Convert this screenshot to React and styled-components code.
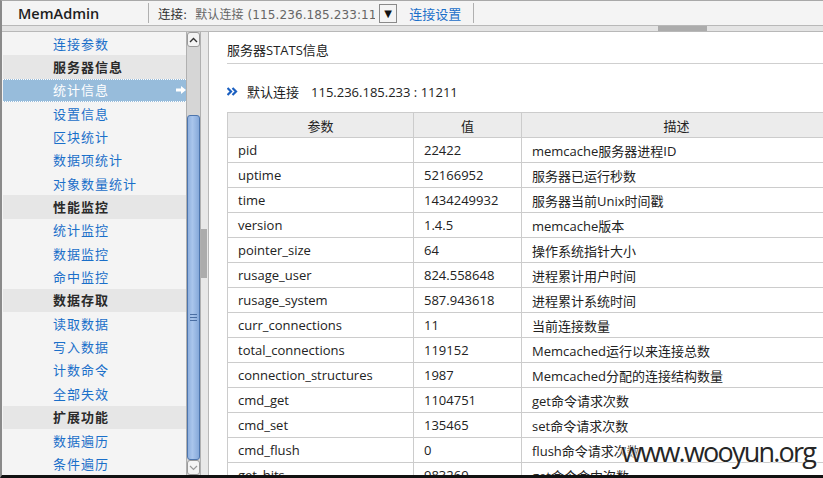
import React from "react";
import styled, { createGlobalStyle } from "styled-components";

const Global = createGlobalStyle`
  html, body { margin: 0; padding: 0; background: #fff; overflow: hidden; }
  * { box-sizing: border-box; }
`;

const CJK = `"Open Sans", "Noto Sans CJK SC", sans-serif`;
const UI = `"DejaVu Sans", "Noto Sans CJK SC", sans-serif`;

const Frame = styled.div`
  position: relative;
  width: 823px;
  height: 478px;
  border-top: 1px solid #a8a8a8;
  border-left: 2px solid #8a8a8a;
  border-bottom: 3px solid #111;
  display: flex;
  flex-direction: column;
  overflow: hidden;
  font-family: ${CJK};
`;

const TopBar = styled.div`
  height: 25px;
  flex: none;
  background: #f4f4f4;
  border-bottom: 1px solid #b8b8b8;
  display: flex;
  align-items: center;
  font-family: ${UI};
  font-size: 12.5px;
  color: #333;
`;

const Brand = styled.div`
  width: 146px;
  padding-left: 16px;
  font-family: "Open Sans", sans-serif;
  font-size: 14.5px;
  font-weight: 600;
  color: #1e1e1e;
`;

const Sep = styled.div`
  width: 1px;
  height: 20px;
  background: #b0b0b0;
`;

const ConnLabel = styled.span`
  margin-left: 9px;
  color: #333;
  white-space: nowrap;
`;

const SelectBox = styled.div`
  display: flex;
  align-items: center;
  margin-left: 8px;
  gap: 4px;
`;

const SelectText = styled.span`
  width: 180px;
  overflow: hidden;
  white-space: nowrap;
  color: #666;
  font-size: 12px;
  letter-spacing: 0.1px;
`;

const SelectBtn = styled.span`
  width: 18px;
  height: 19px;
  border: 1px solid #8a8a8a;
  background: #f4f4f4;
  display: flex;
  align-items: center;
  justify-content: center;
  font-size: 10px;
  color: #111;
`;

const TopLink = styled.a`
  margin: 0 12px 0 12px;
  color: #1a6fc9;
  text-decoration: none;
  font-family: ${CJK};
  font-size: 13px;
  white-space: nowrap;
`;

const HScroll = styled.div`
  height: 6px;
  flex: none;
  background: #e4e4e4;
  border-bottom: 1px solid #b8b8b8;
  padding-left: 656px;
`;

const HThumb = styled.div`
  width: 49px;
  height: 5px;
  background: #acacac;
`;

const Main = styled.div`
  flex: 1;
  display: flex;
  min-height: 0;
`;

const Menu = styled.div`
  width: 184px;
  flex: none;
  background: #f4f4f4;
  overflow: hidden;
  padding-left: 1px;
`;

const Item = styled.div`
  position: relative;
  height: 23.35px;
  display: flex;
  align-items: center;
  padding: 0 0 1px 50px;
  font-size: 13px;
  letter-spacing: 1px;
  white-space: nowrap;
  color: ${(p) => (p.$head ? "#2a2a2a" : p.$active ? "#fff" : "#1a6fc9")};
  font-weight: ${(p) => (p.$head ? 700 : 400)};
  background: ${(p) => (p.$head ? "#e6e6e6" : p.$active ? "#97bcdb" : "transparent")};
  border-top: ${(p) => (p.$active ? "1px dotted #fff" : "none")};
  border-bottom: ${(p) => (p.$active ? "1px dotted #fff" : "none")};
`;

const Arrow = styled.svg`
  position: absolute;
  right: 0;
  top: 50%;
  margin-top: -4px;
`;

const VScroll = styled.div`
  width: 15px;
  flex: none;
  display: flex;
  flex-direction: column;
  background: #d6d6d6;
  border-left: 1px solid #b0b0b0;
  border-right: 1px solid #b0b0b0;
`;

const ScrollBtn = styled.div`
  height: 15px;
  flex: none;
  background: #f4f4f4;
  border: 1px solid #9a9a9a;
  border-radius: 3px;
  display: flex;
  align-items: center;
  justify-content: center;
`;

const TrackGap = styled.div`
  height: 68px;
  flex: none;
`;

const Thumb = styled.div`
  flex: 1;
  border: 1px solid #4d75ad;
  border-radius: 3px;
  background: linear-gradient(to right, #8fb0de, #a9c5ec 40%, #86a9da);
  display: flex;
  align-items: center;
  justify-content: center;
  padding-top: 60px;
`;

const Grip = styled.div`
  width: 7px;
  height: 7px;
  border-top: 1px solid #4a6ea3;
  border-bottom: 1px solid #4a6ea3;
  position: relative;
  &::after {
    content: "";
    position: absolute;
    left: 0;
    right: 0;
    top: 2px;
    height: 1px;
    background: #4a6ea3;
  }
`;

const Splitter = styled.div`
  width: 8px;
  flex: none;
  background: #e8e8e8;
  border-right: 1px solid #b8b8b8;
  padding-top: 197px;
`;

const SplitThumb = styled.div`
  height: 49px;
  width: 6px;
  background: #acacac;
`;

const Content = styled.div`
  flex: 1;
  min-width: 0;
  background: #fff;
  overflow: hidden;
  padding: 9px 0 0 18px;
  color: #222;
`;

const Title = styled.div`
  font-size: 13px;
  line-height: 18px;
  padding-bottom: 4px;
  border-bottom: 1px solid #cfcfcf;
  white-space: nowrap;
`;

const ConnLine = styled.div`
  margin-top: 18px;
  height: 19px;
  display: flex;
  align-items: center;
  font-size: 13px;
  white-space: nowrap;
`;

const ConnName = styled.span`
  margin-left: 9px;
  margin-right: 12px;
`;

const Table = styled.table`
  margin-top: 11px;
  border-collapse: collapse;
  table-layout: fixed;
  width: 604px;
  font-size: 13px;
  color: #222;
`;

const Th = styled.th`
  height: 25px;
  background: #ececec;
  border: 1px solid #cccccc;
  font-weight: 400;
  text-align: center;
  padding: 0;
`;

const Td = styled.td`
  height: 25px;
  border: 1px solid #cccccc;
  padding: 0 0 0 10px;
  white-space: nowrap;
  overflow: hidden;
`;

const Watermark = styled.div`
  position: absolute;
  right: 8px;
  bottom: 8px;
  font-family: "Open Sans", sans-serif;
  font-size: 27px;
  letter-spacing: -1.8px;
  color: #262626;
  text-shadow: 0 0 2px #fff, 0 0 2px #fff, 0 0 3px #fff;
  line-height: 30px;
`;

const menu = [
  ["连接参数"],
  ["服务器信息", "head"],
  ["统计信息", "active"],
  ["设置信息"],
  ["区块统计"],
  ["数据项统计"],
  ["对象数量统计"],
  ["性能监控", "head"],
  ["统计监控"],
  ["数据监控"],
  ["命中监控"],
  ["数据存取", "head"],
  ["读取数据"],
  ["写入数据"],
  ["计数命令"],
  ["全部失效"],
  ["扩展功能", "head"],
  ["数据遍历"],
  ["条件遍历"],
];

const rows = [
  ["pid", "22422", "memcache服务器进程ID"],
  ["uptime", "52166952", "服务器已运行秒数"],
  ["time", "1434249932", "服务器当前Unix时间戳"],
  ["version", "1.4.5", "memcache版本"],
  ["pointer_size", "64", "操作系统指针大小"],
  ["rusage_user", "824.558648", "进程累计用户时间"],
  ["rusage_system", "587.943618", "进程累计系统时间"],
  ["curr_connections", "11", "当前连接数量"],
  ["total_connections", "119152", "Memcached运行以来连接总数"],
  ["connection_structures", "1987", "Memcached分配的连接结构数量"],
  ["cmd_get", "1104751", "get命令请求次数"],
  ["cmd_set", "135465", "set命令请求次数"],
  ["cmd_flush", "0", "flush命令请求次数"],
  ["get_hits", "983269", "get命令命中次数"],
];

export default function App() {
  return (
    <>
      <Global />
      <Frame>
        <TopBar>
          <Brand>MemAdmin</Brand>
          <Sep />
          <ConnLabel>连接:</ConnLabel>
          <SelectBox>
            <SelectText>默认连接 (115.236.185.233:11211)</SelectText>
            <SelectBtn>▼</SelectBtn>
          </SelectBox>
          <TopLink>连接设置</TopLink>
          <Sep />
        </TopBar>
        <HScroll>
          <HThumb />
        </HScroll>
        <Main>
          <Menu>
            {menu.map(([t, k]) => (
              <Item key={t} $head={k === "head"} $active={k === "active"}>
                {t}
                {k === "active" && (
                  <Arrow width="10" height="8" viewBox="0 0 10 8">
                    <path d="M0 2.5h5V0l5 4-5 4V5.5H0z" fill="#fff" />
                  </Arrow>
                )}
              </Item>
            ))}
          </Menu>
          <VScroll>
            <ScrollBtn>
              <svg width="9" height="6" viewBox="0 0 9 6">
                <path d="M1 5l3.5-3.5L8 5" stroke="#333" strokeWidth="1.4" fill="none" />
              </svg>
            </ScrollBtn>
            <TrackGap />
            <Thumb>
              <Grip />
            </Thumb>
            <ScrollBtn>
              <svg width="9" height="6" viewBox="0 0 9 6">
                <path d="M1 1l3.5 3.5L8 1" stroke="#999" strokeWidth="1.2" fill="none" />
              </svg>
            </ScrollBtn>
          </VScroll>
          <Splitter>
            <SplitThumb />
          </Splitter>
          <Content>
            <Title>服务器STATS信息</Title>
            <ConnLine>
              <svg width="11" height="9" viewBox="0 0 11 9">
                <path d="M0.5 1l3.5 3.5L0.5 8M5.5 1L9 4.5 5.5 8" stroke="#1a5fc0" strokeWidth="2.2" fill="none" />
              </svg>
              <ConnName>默认连接</ConnName>
              <span>115.236.185.233 : 11211</span>
            </ConnLine>
            <Table>
              <colgroup>
                <col style={{ width: 186 }} />
                <col style={{ width: 108 }} />
                <col style={{ width: 310 }} />
              </colgroup>
              <thead>
                <tr>
                  <Th>参数</Th>
                  <Th>值</Th>
                  <Th>描述</Th>
                </tr>
              </thead>
              <tbody>
                {rows.map((r) => (
                  <tr key={r[0]}>
                    <Td>{r[0]}</Td>
                    <Td>{r[1]}</Td>
                    <Td>{r[2]}</Td>
                  </tr>
                ))}
              </tbody>
            </Table>
          </Content>
        </Main>
        <Watermark>www.wooyun.org</Watermark>
      </Frame>
    </>
  );
}
